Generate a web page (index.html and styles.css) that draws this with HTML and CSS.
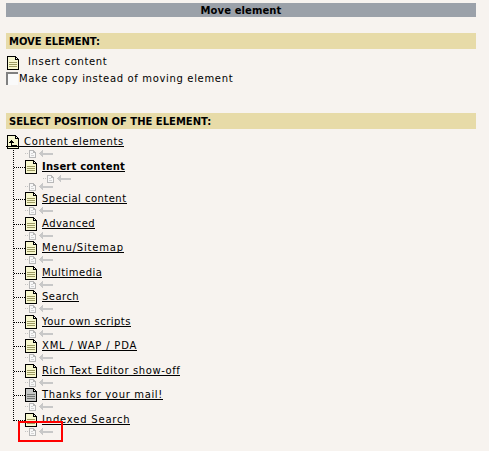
FILE: index.html
```
<!DOCTYPE html>
<html lang="en">
<head>
<meta charset="utf-8">
<title>Move element</title>
<link rel="stylesheet" href="styles.css">
</head>
<body>
<svg width="0" height="0" class="defs">
  <symbol id="page" viewBox="0 0 12 14">
    <path class="fill" d="M1 1h7v3h3v9H1z"/>
    <path d="M0 0h9v1H0zM0 0h1v14H0zM0 13h12v1H0zM11 3h1v11h-1zM8 1h1v3H8zM8 3h4v1H8zM9 1h1v1H9zM10 2h1v1h-1z"/>
    <path class="lines" d="M2 6h8v1H2zM2 8h8v1H2zM2 10h8v1H2z"/>
  </symbol>
  <symbol id="up" viewBox="0 0 12 14">
    <path class="fill" d="M1 1h7v3h3v9H1z"/>
    <path d="M0 0h9v1H0zM0 0h1v14H0zM0 13h12v1H0zM11 3h1v11h-1zM8 1h1v3H8zM8 3h4v1H8zM9 1h1v1H9zM10 2h1v1h-1z"/>
    <path d="M4 5h1v6H4zM3 6h3v1H3zM2 7h5v1H2zM4 10h6v1H4z"/>
  </symbol>
  <symbol id="insert" viewBox="0 0 28 8">
    <path fill="#c4c4c4" d="M0 3h1v1H0zM2 3h1v1H2z"/>
    <path fill="#f8f8f8" d="M5 1h5v6H5z"/>
    <path fill="#b8b8b8" d="M4 0h5v1H4zM4 0h1v8H4zM4 7h7v1H4zM10 2h1v6h-1zM8 1h1v2H8zM8 2h3v1H8zM9 1h1v1H9z"/>
    <path fill="#d4d4d4" d="M6 3h2v1H6zM6 5h3v1H6z"/>
    <path fill="#c8c8c8" d="M14 3h1v-1h1v-1h1v-1h1v3h10v2H18v2h-1v-1h-1v-1h-1v-1h-1z"/>
  </symbol>
</svg>
<div class="doc">
  <h1>Move element</h1>
  <h2>MOVE ELEMENT:</h2>
  <div class="subject"><svg class="icon"><use href="#page"/></svg><span class="wide">Insert content</span></div>
  <label class="copy"><i class="check"></i><span class="wide">Make copy instead of moving element</span></label>
  <h2 class="second">SELECT POSITION OF THE ELEMENT:</h2>
  <a class="root"><svg class="icon"><use href="#up"/></svg><span class="wide">Content elements</span></a>
  <div class="tree">
    <div class="slot tall"><svg><use href="#insert"/></svg></div>
    <div class="row"><svg class="icon"><use href="#page"/></svg><a class="current">Insert content</a></div>
    <div class="slot nested"><svg><use href="#insert"/></svg></div>
    <div class="slot"><svg><use href="#insert"/></svg></div>
    <div class="row"><svg class="icon"><use href="#page"/></svg><a>Special content</a></div>
    <div class="slot tall"><svg><use href="#insert"/></svg></div>
    <div class="row"><svg class="icon"><use href="#page"/></svg><a>Advanced</a></div>
    <div class="slot"><svg><use href="#insert"/></svg></div>
    <div class="row"><svg class="icon"><use href="#page"/></svg><a class="wider">Menu/Sitemap</a></div>
    <div class="slot tall"><svg><use href="#insert"/></svg></div>
    <div class="row"><svg class="icon"><use href="#page"/></svg><a>Multimedia</a></div>
    <div class="slot"><svg><use href="#insert"/></svg></div>
    <div class="row"><svg class="icon"><use href="#page"/></svg><a>Search</a></div>
    <div class="slot tall"><svg><use href="#insert"/></svg></div>
    <div class="row"><svg class="icon"><use href="#page"/></svg><a>Your own scripts</a></div>
    <div class="slot"><svg><use href="#insert"/></svg></div>
    <div class="row"><svg class="icon"><use href="#page"/></svg><a class="wider">XML / WAP / PDA</a></div>
    <div class="slot tall"><svg><use href="#insert"/></svg></div>
    <div class="row"><svg class="icon"><use href="#page"/></svg><a class="medium">Rich Text Editor show-off</a></div>
    <div class="slot"><svg><use href="#insert"/></svg></div>
    <div class="row"><svg class="icon gray"><use href="#page"/></svg><a class="wide">Thanks for your mail!</a></div>
    <div class="slot tall"><svg><use href="#insert"/></svg></div>
    <div class="row"><svg class="icon"><use href="#page"/></svg><a class="wider">Indexed Search</a></div>
    <div class="slot last"><svg><use href="#insert"/></svg><span class="marker"></span></div>
  </div>
</div>
</body>
</html>
```
FILE: styles.css
```
* { box-sizing: border-box; }
body { margin: 0; background: #f7f3ef; color: #000; font: 10px/14px "DejaVu Sans", Verdana, sans-serif; letter-spacing: .47px; overflow: hidden; height: 451px; }
.defs { position: absolute; }
svg { display: block; flex: none; shape-rendering: crispEdges; }
.doc { width: 470px; margin-left: 6px; padding-top: 3px; white-space: nowrap; }
h1, h2 { margin: 0; font-size: 10px; font-weight: bold; }
h1 { height: 14px; line-height: 15px; background: #9ba1a9; text-align: center; letter-spacing: .1px; }
h2 { height: 16px; line-height: 17px; margin-top: 16px; padding-left: 3px; background: #e7dba8; letter-spacing: -.05px; }
h2.second { margin-top: 28px; letter-spacing: 0; }
.medium { letter-spacing: .59px; }
.wide { letter-spacing: .66px; }
.wider { letter-spacing: .8px; }
.icon { width: 12px; height: 14px; }
.fill { fill: var(--paper, #f7f7ce); }
.lines { fill: var(--ink, #9c9a63); }
.gray { --paper: #c6c7c6; --ink: #737573; }
.subject { display: flex; height: 16px; margin-top: 7px; padding-left: 1px; line-height: 12px; }
.subject span { margin-left: 9px; }
.copy { display: flex; height: 13px; }
.check { width: 12px; height: 13px; margin-right: 1px; background: #fafafa; border: solid #808080; border-width: 2px 0 0 2px; }
.root { display: flex; height: 15px; margin-top: 6px; padding-left: 1px; position: relative; }
.root::after { content: ""; position: absolute; left: 0; top: 11px; width: 118px; height: 1px; background: #000; }
.root span { margin-left: 5px; }
.tree { position: relative; padding-left: 19px; }
.tree::before { content: ""; position: absolute; left: 7px; top: 0; width: 1px; height: 271px; background: repeating-linear-gradient(#000 0 1px, transparent 1px 2px); }
.row { display: flex; height: 15px; line-height: 13px; }
.row::before { content: ""; width: 11px; height: 1px; margin: 7px 0 0 -11px; background: repeating-linear-gradient(90deg, #000 0 1px, transparent 1px 2px); }
.row a { margin-left: 5px; height: 12px; border-bottom: 1px solid #000; }
.row .current { font-weight: bold; letter-spacing: .2px; }
.slot { height: 9px; position: relative; }
.slot svg { width: 28px; height: 8px; }
.slot.tall { height: 10px; }
.slot.nested { height: 8px; padding-left: 18px; }
.marker { position: absolute; left: -7px; top: -7px; width: 45px; height: 21px; border: 2px solid #f00; }
```
